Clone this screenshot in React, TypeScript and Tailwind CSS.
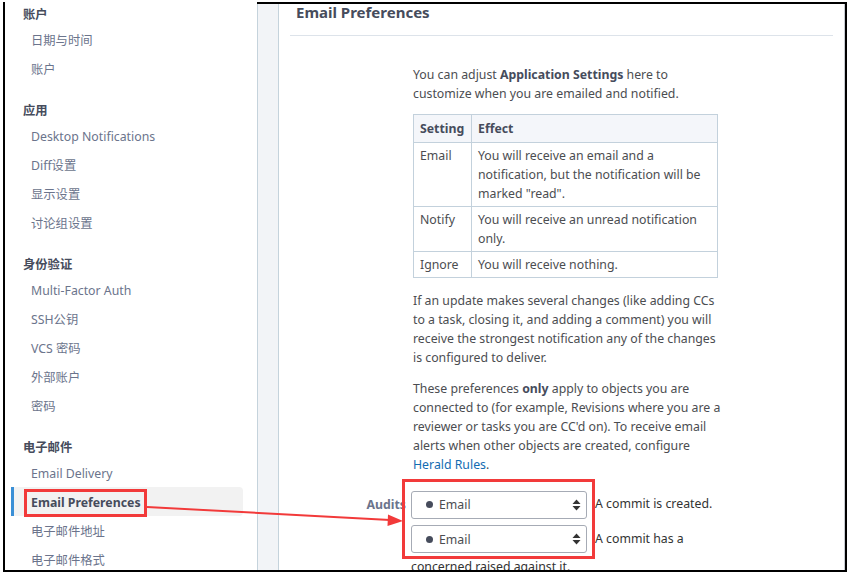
import type { ReactNode } from 'react';

const font = "font-['Noto_Sans','Noto_Sans_CJK_SC',sans-serif]";

type NavItem = { label: string; active?: boolean };
type NavGroup = { title: string; items: NavItem[] };

const groups: NavGroup[] = [
  { title: '账户', items: [{ label: '日期与时间' }, { label: '账户' }] },
  {
    title: '应用',
    items: [
      { label: 'Desktop Notifications' },
      { label: 'Diff设置' },
      { label: '显示设置' },
      { label: '讨论组设置' },
    ],
  },
  {
    title: '身份验证',
    items: [
      { label: 'Multi-Factor Auth' },
      { label: 'SSH公钥' },
      { label: 'VCS 密码' },
      { label: '外部账户' },
      { label: '密码' },
    ],
  },
  {
    title: '电子邮件',
    items: [
      { label: 'Email Delivery' },
      { label: 'Email Preferences', active: true },
      { label: '电子邮件地址' },
      { label: '电子邮件格式' },
    ],
  },
];

function Sidebar() {
  return (
    <aside className="w-[252px] shrink-0 pt-[2px]">
      {groups.map((g, i) => (
        <div key={g.title} className={i > 0 ? 'mt-[17px]' : ''}>
          <div className="h-[21px] pl-[18px] flex items-center font-bold text-[#464c5c]">{g.title}</div>
          {g.items.map((item) => (
            <div
              key={item.label}
              className={
                item.active
                  ? 'h-[29px] ml-[6px] mr-[14px] pl-[17px] pt-[2px] flex items-center border-l-[3px] border-[#3a8fd6] bg-[#f2f2f2] rounded-r-[4px] font-bold text-[#464c5c]'
                  : 'h-[29px] ml-[6px] mr-[14px] pl-[17px] pt-[2px] flex items-center border-l-[3px] border-transparent text-[#6b748c]'
              }
            >
              {item.label}
            </div>
          ))}
        </div>
      ))}
    </aside>
  );
}

function Th({ children, first }: { children: ReactNode; first?: boolean }) {
  return (
    <th
      className={
        (first ? 'w-[58px] ' : '') +
        'border border-[#c3d1dc] bg-[#f4f6fa] px-[6px] py-[4px] text-left font-bold text-[#464c5c] align-top'
      }
    >
      {children}
    </th>
  );
}

function Td({ children }: { children: ReactNode }) {
  return <td className="border border-[#c3d1dc] px-[6px] pt-[3px] pb-[3px] align-top">{children}</td>;
}

function SelectBox() {
  return (
    <span className="inline-flex align-middle w-[176px] h-[28px] mr-[8px] items-center border border-[#a6abb5] rounded-[3px] bg-white pl-[14px] pr-[5px] leading-[19px] text-[#4b4d51]">
      <span className="w-[7px] h-[7px] rounded-full bg-[#464c5c]" />
      <span className="ml-[6px] flex-1">Email</span>
      <svg width="9" height="12" viewBox="0 0 9 12" className="text-[#333]">
        <path d="M4.5 0.5 L8.5 5 H0.5 Z" fill="currentColor" />
        <path d="M4.5 11.5 L8.5 7 H0.5 Z" fill="currentColor" />
      </svg>
    </span>
  );
}

function FormRow({ label, text, first }: { label?: string; text: string; first?: boolean }) {
  return (
    <div className={'flex ' + (first ? 'mt-[16px]' : 'mt-[6px]')}>
      <div className="w-[116px] shrink-0 text-right h-[28px] flex items-center justify-end font-bold text-[#6b748c]">
        {label}
      </div>
      <div className="ml-[5px] w-[307px] leading-[27px] text-[#333]">
        <SelectBox />
        {text}
      </div>
    </div>
  );
}

function Main() {
  return (
    <main className="flex-1 px-[11px] border-r border-[#c8ccd2] text-[#4b4d51] overflow-hidden">
      <h1 className="pl-[6px] text-[15px] leading-[16px] font-bold text-[#464c5c]">Email Preferences</h1>
      <div className="mt-[15px] border-t border-[#dde3ea]" />
      <div className="ml-[123px] w-[309px] mt-[29px]">
        <p className="mb-[11px]">
          You can adjust <b className="text-[#464c5c]">Application Settings</b> here to customize when you are emailed and
          notified.
        </p>
        <table className="w-[305px] border-collapse mb-[13px]">
          <thead>
            <tr>
              <Th first>Setting</Th>
              <Th>Effect</Th>
            </tr>
          </thead>
          <tbody>
            <tr>
              <Td>Email</Td>
              <Td>You will receive an email and a notification, but the notification will be marked "read".</Td>
            </tr>
            <tr>
              <Td>Notify</Td>
              <Td>You will receive an unread notification only.</Td>
            </tr>
            <tr>
              <Td>Ignore</Td>
              <Td>You will receive nothing.</Td>
            </tr>
          </tbody>
        </table>
        <p className="mb-[12px]">
          If an update makes several changes (like adding CCs to a task, closing it, and adding a comment) you will
          receive the strongest notification any of the changes is configured to deliver.
        </p>
        <p>
          These preferences <b className="text-[#464c5c]">only</b> apply to objects you are connected to (for example,
          Revisions where you are a reviewer or tasks you are CC'd on). To receive email alerts when other objects are
          created, configure <span className="text-[#136cb2]">Herald Rules</span>.
        </p>
      </div>
      <FormRow first label="Audits" text="A commit is created." />
      <FormRow text="A commit has a concerned raised against it." />
    </main>
  );
}

export default function App() {
  return (
    <div className={'relative w-[848px] h-[573px] overflow-hidden bg-white text-[12.3px] leading-[19px] ' + font}>
      <div className="ml-[3px] mt-[2px] w-[844px] h-[570px] border-l-2 border-r-2 border-b-2 border-black flex overflow-hidden">
        <Sidebar />
        <div className="flex-1 flex border-t-2 border-black">
          <div className="w-[22px] shrink-0 border-x border-[#c5d3dc] bg-[#f2f4f7]" />
          <Main />
        </div>
      </div>
      {/* annotation overlay */}
      <svg className="absolute inset-0 pointer-events-none" width="848" height="573">
        <rect x="25.5" y="490.5" width="120" height="25" fill="none" stroke="#f23a3a" strokeWidth="3" />
        <rect x="403.5" y="480.5" width="190" height="77" fill="none" stroke="#f23a3a" strokeWidth="3" />
        <line x1="147" y1="507" x2="390" y2="520" stroke="#f23a3a" strokeWidth="2" />
        <polygon points="403,521 388,514.5 387.5,526" fill="#f23a3a" />
      </svg>
    </div>
  );
}
